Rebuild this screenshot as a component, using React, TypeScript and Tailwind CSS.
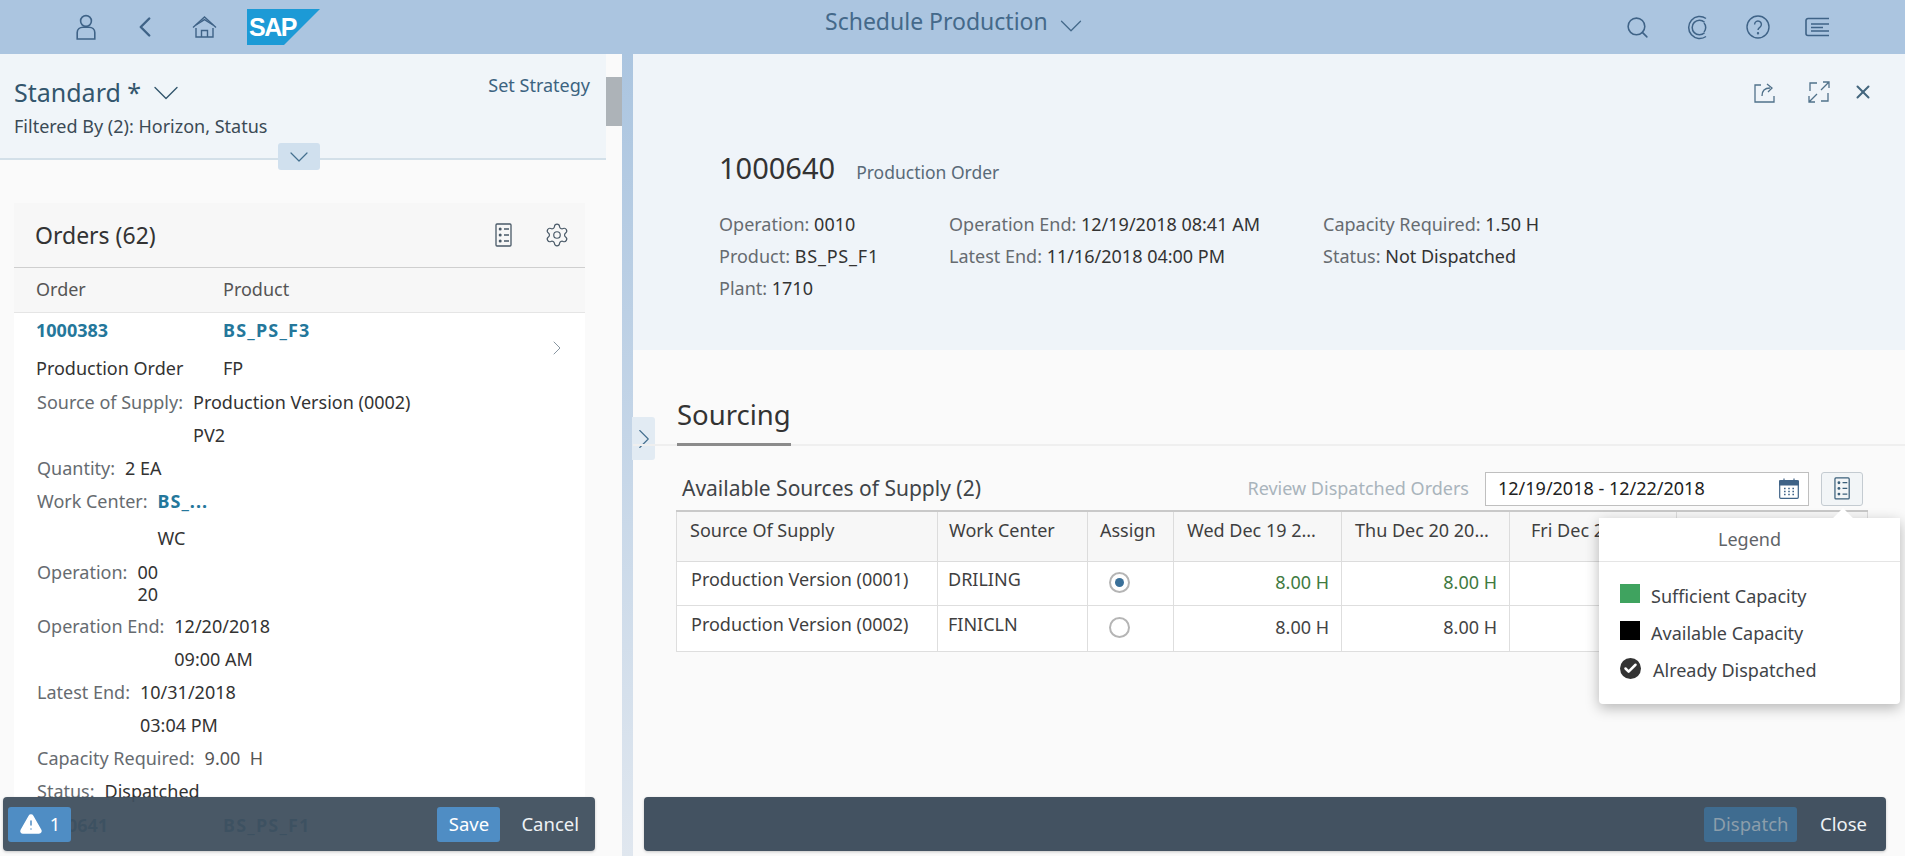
import React from "react";
import { ChevronDown, ChevronLeft, ChevronRight, Search, X, Settings, TriangleAlert, Check } from "lucide-react";

function PersonIcon() {
  return (
    <svg width="20" height="26" viewBox="0 0 20 26" fill="none" stroke="#3f6387" strokeWidth="1.6">
      <circle cx="10" cy="7" r="5.4" />
      <path d="M1.2 25V18.5C1.2 15.2 4 13.2 7 13.2h6c3 0 5.8 2 5.8 5.3V25Z" />
    </svg>
  );
}

function HomeIcon() {
  return (
    <svg width="25" height="22" viewBox="0 0 25 22" fill="none" stroke="#3f6387" strokeWidth="1.4">
      <path d="M1 11.5 12.5 1 24 11.5" />
      <path d="M4 12v9h17v-9" />
      <path d="M4 9 12.5 3.6 21 9" />
      <path d="M9.5 21v-6.5h6V21" />
    </svg>
  );
}

function SapLogo() {
  return (
    <div className="relative ml-[30px] h-[36px] w-[73px]">
      <svg width="73" height="36" viewBox="0 0 73 36" className="absolute inset-0">
        <polygon points="0,0 73,0 37,36 0,36" fill="#1c9ad6" />
      </svg>
      <span className="absolute left-[2px] top-[4px] text-[25px] leading-[28px] font-bold tracking-[-1.5px] text-white font-['Liberation_Sans',sans-serif]">
        SAP
      </span>
    </div>
  );
}

function NotificationIcon() {
  return (
    <svg width="22" height="25" viewBox="0 0 22 25" fill="none" stroke="#3f6387" strokeWidth="1.5">
      <path d="M19 21.5A11 11 0 1 1 19 3.5" />
      <path d="M17.5 17.8a7.3 7.3 0 1 1 0-10.6" transform="translate(0 0)" />
      <path d="M17 8a6.8 6.8 0 0 1 0 9" />
    </svg>
  );
}

function HelpIcon() {
  return (
    <svg width="24" height="24" viewBox="0 0 24 24" fill="none" stroke="#3f6387" strokeWidth="1.4">
      <circle cx="12" cy="12" r="11" />
      <path d="M8.6 9.4a3.4 3.4 0 1 1 5.4 2.7c-1.3.9-2 1.5-2 3" />
      <circle cx="12" cy="18.2" r=".5" fill="#3f6387" />
    </svg>
  );
}

function MenuIcon() {
  return (
    <svg width="25" height="20" viewBox="0 0 25 20" fill="none" stroke="#3f6387" strokeWidth="1.6">
      <path d="M24 1.5H3A2 2 0 0 0 1 3.5v13a2 2 0 0 0 2 2h21" />
      <path d="M6 7h18M6 10.5h12M6 14h18" />
    </svg>
  );
}

function ShareIcon() {
  return (
    <svg width="22" height="21" viewBox="0 0 22 21" fill="none" stroke="#50718a" strokeWidth="1.3">
      <path d="M7 3H1v17h19v-6" />
      <path d="M8 14c0-5 3-8 8-8" />
      <path d="M13 2l5 4-4 4" />
    </svg>
  );
}

function FullscreenIcon() {
  return (
    <svg width="22" height="22" viewBox="0 0 22 22" fill="none" stroke="#50718a" strokeWidth="1.3">
      <path d="M9 2H2v8M13 20h7v-8" />
      <path d="M13 9l8-8M15 1h6v6" />
      <path d="M9 13l-8 8M1 15v6h6" />
    </svg>
  );
}

function LegendIcon({ color, size = 20 }: { color: string; size?: number }) {
  return (
    <svg width={size * 0.85} height={size * 1.2} viewBox="0 0 17 24" fill="none" stroke={color} strokeWidth="1.3">
      <rect x="1" y="1" width="15" height="22" rx="1" />
      <circle cx="5.2" cy="6" r="1.5" fill={color} stroke="none" />
      <circle cx="5.2" cy="12" r="1.5" fill={color} stroke="none" />
      <circle cx="5.2" cy="18" r="1.5" fill={color} stroke="none" />
      <path d="M9 6h5M9 12h5M9 18h5" />
    </svg>
  );
}

function CalendarIcon() {
  return (
    <svg width="20" height="21" viewBox="0 0 20 21" fill="none" stroke="#3f6387" strokeWidth="1.2">
      <rect x=".7" y="2.5" width="18.6" height="17.8" rx="1" />
      <path d="M.7 3h18.6v4H.7Z" fill="#3f6387" />
      <path d="M5 .5v3M15 .5v3" />
      <path d="M5 10.5h1.6M9.2 10.5h1.6M13.4 10.5H15M5 13.5h1.6M9.2 13.5h1.6M13.4 13.5H15M5 16.5h1.6M9.2 16.5h1.6M13.4 16.5H15" strokeWidth="1.5" />
    </svg>
  );
}

// left list row: label plus one or more value lines
function Attr({
  label,
  lines,
  link,
}: {
  label: string;
  lines: string[];
  link?: boolean;
}) {
  return (
    <div className="flex gap-[10px] leading-[33px]">
      <span className="text-[#666b70]">{label}</span>
      <div>
        {lines.map((l, i) => (
          <div
            key={l}
            className={link && i === 0 ? "font-bold tracking-[1px] text-[#24779b]" : i > 0 && link ? "mt-[4px] text-[#333]" : "text-[#333]"}
          >
            {l}
          </div>
        ))}
      </div>
    </div>
  );
}

function OrdersPanel() {
  return (
    <div className="relative flex w-[622px] shrink-0 flex-col overflow-hidden bg-[#fafafa]">
      <div className="flex min-h-0 flex-1">
        <div className="flex w-[606px] shrink-0 flex-col">
          <div className="relative h-[106px] shrink-0 border-b-2 border-[#d3e0e9] bg-[#f0f5f9] pl-[14px] pr-[16px]">
            <div className="flex items-start justify-between">
              <div className="mt-[20px] flex h-[36px] items-center gap-[3px] text-[25px] leading-[36px] text-[#33566d]">
                Standard *
                <ChevronDown size={44} strokeWidth={0.75} className="mt-[1px] text-[#33566d]" />
              </div>
              <div className="mt-[19px] text-[18px] leading-[24px] text-[#3c6380]">Set Strategy</div>
            </div>
            <div className="mt-[4px] text-[18px] leading-[24px] text-[#3b4a55]">Filtered By (2): Horizon, Status</div>
            <div className="absolute left-[278px] top-[89px] flex h-[27px] w-[42px] items-center justify-center rounded-[3px] bg-[#d0e0ee]">
              <ChevronDown size={32} strokeWidth={0.9} className="text-[#44708f]" />
            </div>
          </div>

          <div className="ml-[14px] mr-[21px] mt-[43px] min-h-0 flex-1 text-[18px]">
            <div className="flex h-[65px] items-center justify-between border-b border-[#cfcfcf] bg-[#f7f7f7] pl-[21px] pr-[15px]">
              <span className="text-[23px] text-[#333]">Orders (62)</span>
              <div className="flex items-center gap-[32px]">
                <LegendIcon color="#4a5a68" />
                <Settings size={26} strokeWidth={1.1} className="text-[#4a5a68]" />
              </div>
            </div>
            <div className="flex h-[45px] items-center border-b border-[#e5e5e5] bg-[#f7f7f7] pb-[1px] pl-[22px] text-[#555]">
              <span className="w-[187px]">Order</span>
              <span>Product</span>
            </div>
            <div className="relative bg-white pl-[22px] pt-[1px]">
              <div className="flex h-[33px] items-center font-bold text-[#24779b]">
                <span className="w-[187px]">1000383</span>
                <span className="tracking-[1.2px]">BS_PS_F3</span>
              </div>
              <div className="flex h-[39px] items-center pt-[3px] text-[#333]">
                <span className="w-[187px]">Production Order</span>
                <span>FP</span>
              </div>
              <ChevronRight size={24} strokeWidth={0.9} className="absolute right-[16px] top-[23px] text-[#7a8a96]" />
              <div className="pl-[1px]">
                <Attr label="Source of Supply:" lines={["Production Version (0002)", "PV2"]} />
                <Attr label="Quantity:" lines={["2 EA"]} />
                <Attr label="Work Center:" lines={["BS_...", "WC"]} link />
                <div className="flex gap-[10px] py-[5.5px] leading-[22px]">
                  <span className="text-[#666b70]">Operation:</span>
                  <div className="text-[#333]">
                    <div>00</div>
                    <div>20</div>
                  </div>
                </div>
                <Attr label="Operation End:" lines={["12/20/2018", "09:00 AM"]} />
                <Attr label="Latest End:" lines={["10/31/2018", "03:04 PM"]} />
                <div className="flex gap-[10px] leading-[33px]">
                  <span className="text-[#666b70]">Capacity Required:</span>
                  <span className="text-[#555]">9.00&nbsp; H</span>
                </div>
                <Attr label="Status:" lines={["Dispatched"]} />
              </div>
              <div className="flex h-[34px] items-center font-bold text-[#24779b]">
                <span className="w-[187px]">1000641</span>
                <span className="tracking-[1.2px]">BS_PS_F1</span>
              </div>
            </div>
          </div>
        </div>

        <div className="relative w-[16px] shrink-0 bg-[#fafafa]">
          <div className="h-[23px]" />
          <div className="h-[49px] bg-[#adb3b8]" />
        </div>
      </div>

      <div className="absolute bottom-[5px] left-[3px] flex h-[54px] w-[592px] items-center justify-between rounded-[4px] bg-[#3f4f5e]/95 pl-[5px] pr-[16px] text-[18.5px] shadow-[0_1px_3px_rgba(0,0,0,0.2)]">
        <div className="flex h-[35px] w-[63px] items-center justify-center gap-[7px] rounded-[3px] bg-[#4f8dc4] text-white">
          <TriangleAlert size={24} fill="white" stroke="#ffffff" strokeWidth={1.5} className="[&>path:nth-child(2)]:stroke-[#4f8dc4] [&>path:nth-child(3)]:stroke-[#4f8dc4]" />
          1
        </div>
        <div className="flex items-center gap-[21px] text-white">
          <div className="flex h-[35px] w-[63px] items-center justify-center rounded-[3px] bg-[#4f8dc4]">Save</div>
          <span className="text-[#eef2f5]">Cancel</span>
        </div>
      </div>
    </div>
  );
}

const columns = [
  { label: "Source Of Supply", width: 261, cls: "text-left pl-[13px]" },
  { label: "Work Center", width: 150, cls: "text-left pl-[11px]" },
  { label: "Assign", width: 86, cls: "text-left pl-[12px]" },
  { label: "Wed Dec 19 2...", width: 168, cls: "text-left pl-[13px]" },
  { label: "Thu Dec 20 20...", width: 168, cls: "text-left pl-[13px]" },
  { label: "Fri Dec 21 2018", width: 167, cls: "text-left pl-[21px]" },
  { label: "", width: 191, cls: "" },
];

const rows = [
  { source: "Production Version (0001)", center: "DRILING", checked: true, tone: "text-[#3f7a3f]", h: "h-[44px]" },
  { source: "Production Version (0002)", center: "FINICLN", checked: false, tone: "text-[#444]", h: "h-[46px]" },
];

function SupplyTable() {
  return (
    <table className="w-[1191px] table-fixed border-collapse text-[18px] text-[#3f3f3f]">
      <colgroup>
        {columns.map((c) => (
          <col key={c.width + c.label} style={{ width: c.width }} />
        ))}
      </colgroup>
      <thead>
        <tr className="h-[50px] bg-[#f7f7f7]">
          {columns.map((c, i) => (
            <th
              key={c.width + c.label}
              className={`border border-t-2 border-[#dcdcdc] border-t-[#c9c9c9] pb-[12px] font-normal whitespace-nowrap overflow-hidden ${c.cls} ${i === 3 ? "border-l-[#888]" : ""}`}
            >
              {c.label}
            </th>
          ))}
        </tr>
      </thead>
      <tbody>
        {rows.map((r) => (
          <tr key={r.source} className={`${r.h} bg-white`}>
            <td className="border border-[#dedede] pb-[7px] pl-[14px]">{r.source}</td>
            <td className="border border-[#dedede] pb-[7px] pl-[10px]">{r.center}</td>
            <td className="border border-[#dedede] pb-[1px]">
              <span className="ml-[21px] flex h-[21px] w-[21px] items-center justify-center rounded-full border-2 border-[#b5b5b5] bg-white">
                {r.checked && <span className="h-[9px] w-[9px] rounded-full bg-[#3a7099]" />}
              </span>
            </td>
            <td className={`border border-[#dedede] border-l-[#888] pb-[1px] pr-[12px] text-right ${r.tone}`}>8.00 H</td>
            <td className={`border border-[#dedede] pb-[1px] pr-[12px] text-right ${r.tone}`}>8.00 H</td>
            <td className="border border-[#dedede]" />
            <td className="border border-[#dedede]" />
          </tr>
        ))}
      </tbody>
    </table>
  );
}

function LegendPopover() {
  return (
    <div className="absolute right-[5px] top-[8px] h-[186px] w-[301px] rounded-[4px] bg-white text-[18px] text-[#3f4448] shadow-[0_4px_14px_rgba(0,0,0,0.28)]">
      <div className="absolute right-[50px] top-[-7px] h-[14px] w-[14px] rotate-45 bg-white" />
      <div className="relative flex h-[44px] items-center justify-center border-b border-[#e5e5e5] bg-white text-[#5f6468]">Legend</div>
      <div className="pl-[21px] pt-[22px]">
        <div className="flex h-[37px] items-start gap-[11px]">
          <span className="h-[19px] w-[20px] bg-[#3fa35f]" />
          <span className="leading-[24px]">Sufficient Capacity</span>
        </div>
        <div className="flex h-[37px] items-start gap-[11px]">
          <span className="h-[19px] w-[20px] bg-black" />
          <span className="leading-[24px]">Available Capacity</span>
        </div>
        <div className="flex h-[37px] items-start gap-[12px]">
          <span className="flex h-[21px] w-[21px] items-center justify-center rounded-full bg-[#333]">
            <Check size={15} strokeWidth={4} className="text-white" />
          </span>
          <span className="leading-[24px]">Already Dispatched</span>
        </div>
      </div>
    </div>
  );
}

function DetailPanel() {
  return (
    <div className="relative flex min-w-0 flex-1 flex-col bg-[#fafafa]">
      <div className="relative h-[296px] shrink-0 bg-[#eff4f9] pl-[86px]">
        <div className="absolute right-[31px] top-[27px] flex items-center">
          <ShareIcon />
          <div className="w-[32px]" />
          <FullscreenIcon />
          <div className="w-[22px]" />
          <X size={22} strokeWidth={2.2} className="text-[#44667e]" />
        </div>
        <div className="flex items-baseline gap-[21px] pt-[95px]">
          <span className="text-[29px] leading-[38px] text-[#333]">1000640</span>
          <span className="text-[17.5px] text-[#596a78]">Production Order</span>
        </div>
        <div className="mt-[21px] flex text-[18px] leading-[32px] text-[#333]">
          <div className="w-[230px]">
            <div><span className="text-[#666b70]">Operation:</span> 0010</div>
            <div><span className="text-[#666b70]">Product:</span> <span className="tracking-[0.8px]">BS_PS_F1</span></div>
            <div><span className="text-[#666b70]">Plant:</span> 1710</div>
          </div>
          <div className="w-[374px]">
            <div><span className="text-[#666b70]">Operation End:</span> 12/19/2018 08:41 AM</div>
            <div><span className="text-[#666b70]">Latest End:</span> 11/16/2018 04:00 PM</div>
          </div>
          <div>
            <div><span className="text-[#666b70]">Capacity Required:</span> 1.50 H</div>
            <div><span className="text-[#666b70]">Status:</span> Not Dispatched</div>
          </div>
        </div>
      </div>

      <div className="absolute left-[-1px] top-[363px] flex h-[43px] w-[23px] items-center justify-center rounded-r-[3px] bg-[#e2ebf3]">
        <ChevronRight size={34} strokeWidth={0.8} className="mx-[-6px] shrink-0 text-[#44708f]" />
      </div>

      <div className="relative flex-1">
        <div className="flex h-[96px] items-end border-b-2 border-[#efefef] pl-[44px]">
          <div className="relative top-[2px] border-b-[3px] border-[#8b8b8b] pb-[8px] text-[27.5px] leading-[40px] text-[#333]">
            Sourcing
          </div>
        </div>
        <div className="flex h-[64px] items-center pl-[49px] pr-[42px] pt-[21px]">
          <span className="text-[21px] text-[#3f4448]">Available Sources of Supply (2)</span>
          <span className="ml-auto mr-[16px] text-[18px] text-[#a9b4bc]">Review Dispatched Orders</span>
          <div className="flex h-[34px] w-[324px] items-center justify-between border border-[#bfbfbf] bg-white pl-[12px] pr-[9px] text-[18px] text-[#222]">
            12/19/2018 - 12/22/2018
            <CalendarIcon />
          </div>
          <div className="ml-[12px] flex h-[34px] w-[42px] items-center justify-center rounded-[3px] border border-[#c4cbd1] bg-[#f2f5f7]">
            <LegendIcon color="#3a5f7a" size={19} />
          </div>
        </div>
        <div className="relative pl-[43px]">
          <SupplyTable />
          <LegendPopover />
        </div>
      </div>

      <div className="absolute bottom-[5px] left-[11px] flex h-[54px] w-[1242px] items-center justify-end rounded-[4px] bg-[#435261] pr-[19px] text-[18.5px] shadow-[0_1px_3px_rgba(0,0,0,0.2)]">
        <div className="flex h-[35px] w-[93px] items-center justify-center rounded-[3px] bg-[#3f6c90] text-[#8c9eab]">Dispatch</div>
        <span className="ml-[23px] text-[#eef2f5]">Close</span>
      </div>
    </div>
  );
}

export default function App() {
  return (
    <div className="flex h-[856px] w-[1905px] flex-col overflow-hidden bg-[#fafafa] font-['Noto_Sans',sans-serif]">
      {/* shell bar */}
      <div className="relative flex h-[54px] shrink-0 items-center bg-[#abc5e0] pl-[76px] pr-[75px]">
        <PersonIcon />
        <ChevronLeft size={34} strokeWidth={1.7} className="ml-[32px] text-[#3f6387]" />
        <div className="ml-[30px]"><HomeIcon /></div>
        <SapLogo />
        <div className="absolute left-[825px] top-0 flex h-[42px] items-center gap-[4px] text-[23px] text-[#44698a]">
          Schedule Production
          <ChevronDown size={38} strokeWidth={0.8} className="mt-[10px]" />
        </div>
        <div className="ml-auto flex items-center">
          <Search size={25} strokeWidth={1.5} className="text-[#3f6387]" />
          <div className="w-[37px]" />
          <NotificationIcon />
          <div className="w-[37px]" />
          <HelpIcon />
          <div className="w-[35px]" />
          <MenuIcon />
        </div>
      </div>

      <div className="flex min-h-0 flex-1">
        <OrdersPanel />
        {/* splitter */}
        <div className="w-[11px] shrink-0 bg-gradient-to-b from-[#abc5e0] to-[#e0e7ef]" />
        <DetailPanel />
      </div>
    </div>
  );
}
